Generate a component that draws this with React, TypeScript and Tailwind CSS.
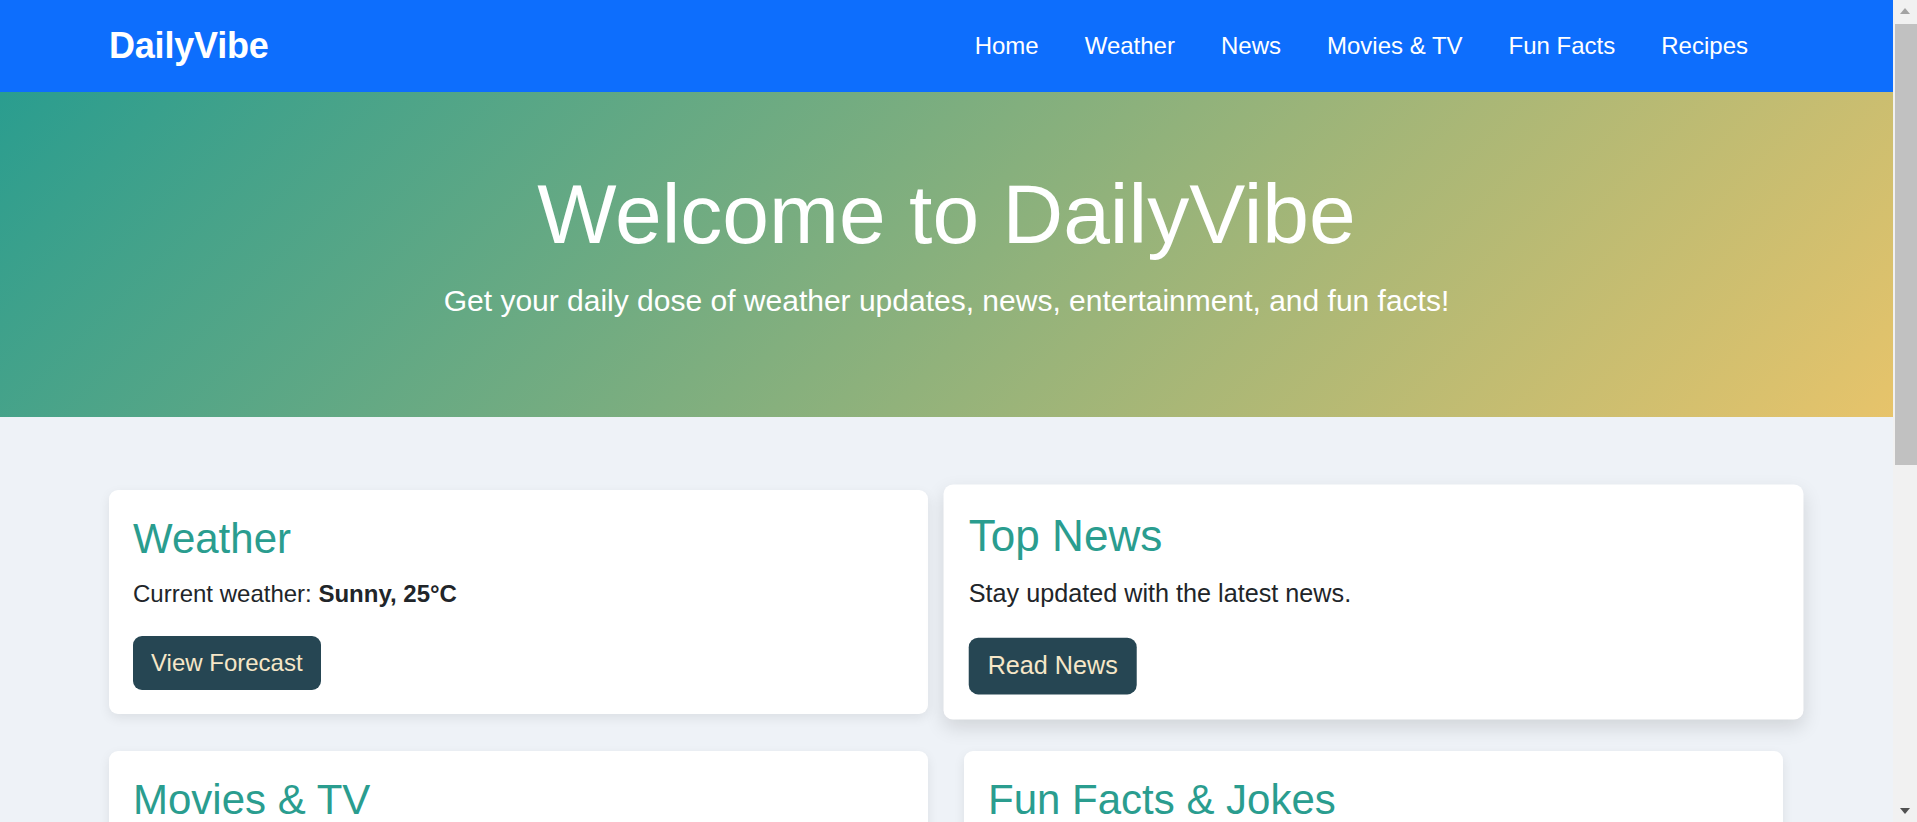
import React from "react";

const cards = [
  {
    title: "Weather",
    body: (
      <>
        Current weather: <strong className="font-bold">Sunny, 25°C</strong>
      </>
    ),
    button: "View Forecast",
    hover: false,
  },
  {
    title: "Top News",
    body: <>Stay updated with the latest news.</>,
    button: "Read News",
    hover: true,
  },
  {
    title: "Movies & TV",
    body: <>Discover trending movies and TV shows.</>,
    button: "Explore Now",
    hover: false,
  },
  {
    title: "Fun Facts & Jokes",
    body: <>Brighten your day with a fun fact or a joke.</>,
    button: "Get a Fact",
    hover: false,
  },
  {
    title: "Recipes",
    body: <>Find easy and delicious recipes for every meal.</>,
    button: "Browse Recipes",
    hover: false,
  },
  {
    title: "Quote of the Day",
    body: <>“Every day is a new beginning.”</>,
    button: "More Quotes",
    hover: false,
  },
];

const links = ["Home", "Weather", "News", "Movies & TV", "Fun Facts", "Recipes"];

function FakeScrollbar() {
  return (
    <div className="fixed top-0 right-0 w-[24px] h-screen bg-[#f1f1f1] flex flex-col">
      <div className="h-[22px] flex items-center justify-center">
        <svg width="10" height="6" viewBox="0 0 10 6">
          <polygon points="5,0 10,6 0,6" fill="#a3a3a3" />
        </svg>
      </div>
      <div className="ml-[2px] mt-[2px] w-[22px] h-[441px] bg-[#c1c1c1]" />
      <div className="flex-1" />
      <div className="h-[22px] flex items-center justify-center">
        <svg width="10" height="6" viewBox="0 0 10 6">
          <polygon points="0,0 10,0 5,6" fill="#505050" />
        </svg>
      </div>
    </div>
  );
}

export default function App() {
  return (
    <div
      className="min-h-screen bg-[#eef2f7] text-[#212529]"
      style={{ fontFamily: '"Liberation Sans", Arial, Helvetica, sans-serif' }}
    >
      <nav className="bg-[#0d6efd] h-[92px]">
        <div className="w-[1771px] h-full flex items-center justify-between pl-[109px]">
          <a className="text-white text-[36px] font-bold leading-none tracking-[-0.2px]">DailyVibe</a>
          <ul className="flex items-center">
            {links.map((l) => (
              <li key={l}>
                <a className="block px-[23px] text-white text-[24px] leading-[1.5]">{l}</a>
              </li>
            ))}
          </ul>
        </div>
      </nav>

      <header className="h-[325px] bg-[linear-gradient(135deg,#2a9d8f,#e9c46a)]">
        <div className="w-[1893px] pt-[72px] text-center text-white">
          <h1 className="text-[84px] leading-[1.2] font-normal mb-[13px]">Welcome to DailyVibe</h1>
          <p className="text-[30px] leading-[1.5]">
            Get your daily dose of weather updates, news, entertainment, and fun facts!
          </p>
        </div>
      </header>

      <main className="pt-[73px] pb-[72px] pl-[109px]">
        <div className="grid grid-cols-[819px_819px] gap-x-[36px] gap-y-[37px]">
          {cards.map((c) => (
            <section
              key={c.title}
              className={
                c.hover
                  ? "bg-white rounded-[9px] p-[24px] scale-105 shadow-[0_8px_18px_rgba(0,0,0,0.12)]"
                  : "bg-white rounded-[9px] p-[24px] shadow-[0_4px_12px_rgba(0,0,0,0.08)]"
              }
            >
              <h3 className="text-[42px] leading-[1.2] font-normal text-[#2a9d8f] mb-[12px]">{c.title}</h3>
              <p className="text-[24px] leading-[1.5] mb-[24px]">{c.body}</p>
              <a className="inline-block bg-[#264653] text-[#f6e7c8] text-[24px] leading-[1.5] px-[18px] py-[9px] rounded-[9px]">
                {c.button}
              </a>
            </section>
          ))}
        </div>
      </main>

      <footer className="bg-[#264653] text-[#f6e7c8] text-center text-[24px] leading-[1.5] py-[48px]">
        © 2024 DailyVibe. All rights reserved.
      </footer>

      <FakeScrollbar />
    </div>
  );
}
